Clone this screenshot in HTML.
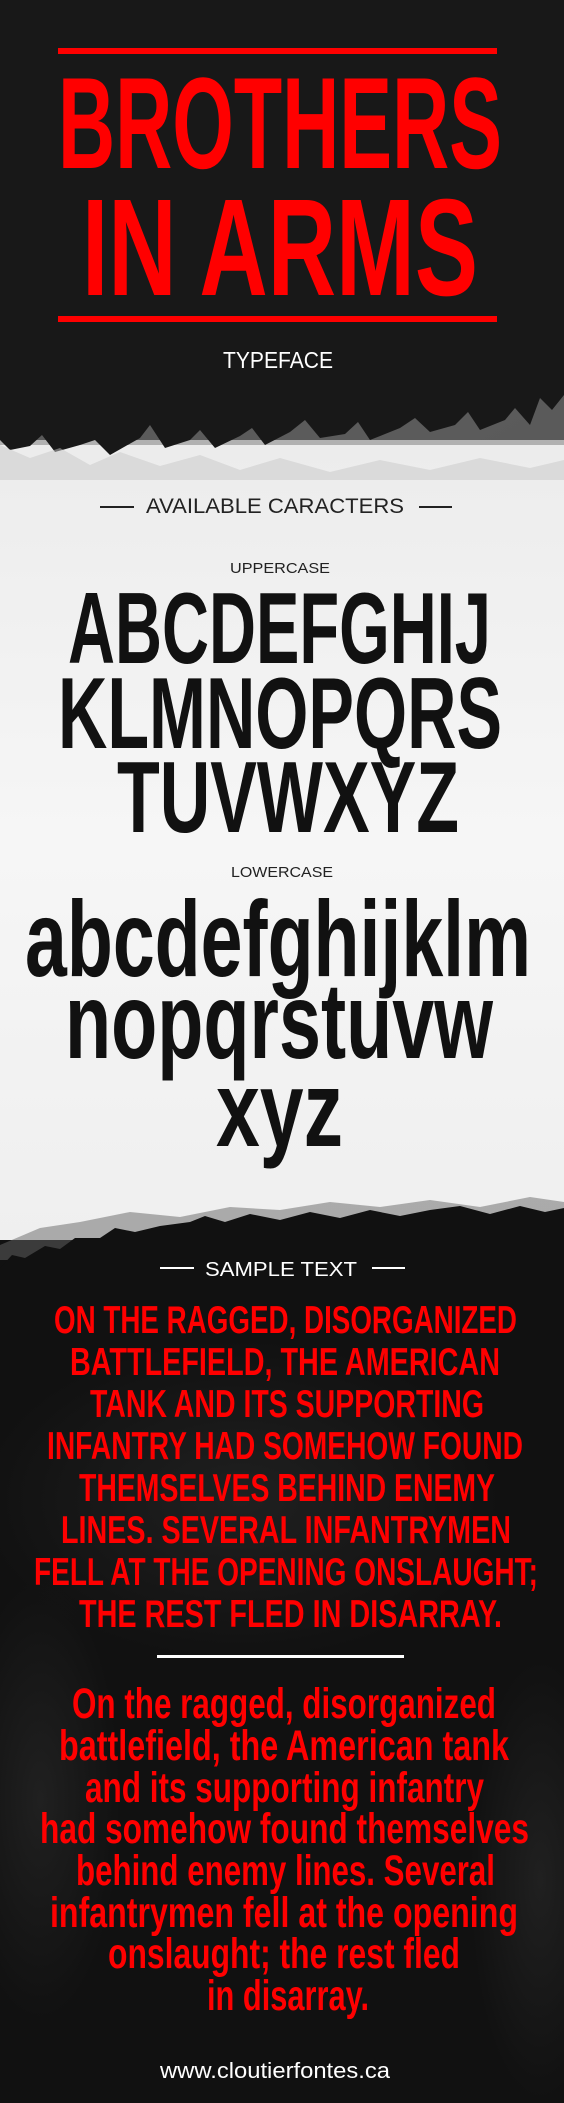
<!DOCTYPE html>
<html><head><meta charset="utf-8"><style>html,body{margin:0;padding:0;background:#111}svg{display:block}</style></head>
<body>
<svg width="564" height="2103" viewBox="0 0 564 2103" xmlns="http://www.w3.org/2000/svg" font-family="'Liberation Sans', sans-serif">
<defs>
<radialGradient id="g1" cx="0.5" cy="0.4" r="0.7"><stop offset="0" stop-color="#1f1f1f"/><stop offset="1" stop-color="#131313"/></radialGradient>
<linearGradient id="w" x1="0" y1="0" x2="0" y2="1"><stop offset="0" stop-color="#ececec"/><stop offset="0.5" stop-color="#f6f6f6"/><stop offset="1" stop-color="#efefef"/></linearGradient>
<radialGradient id="soft"><stop offset="0" stop-color="#2a2a2a" stop-opacity="0.6"/><stop offset="1" stop-color="#2a2a2a" stop-opacity="0"/></radialGradient>
</defs>
<rect width="564" height="2103" fill="#111"/>
<rect width="564" height="460" fill="url(#g1)"/>
<rect y="440" width="564" height="800" fill="url(#w)"/>
<!-- top ragged transition -->
<polygon fill="#8a8a8a" opacity="0.6" points="0,390 20,400 40,385 60,405 90,392 120,408 150,385 180,410 210,382 240,400 270,375 300,392 330,385 360,402 390,385 420,395 450,388 480,400 510,385 540,395 564,385 564,445 0,445"/>
<polygon fill="#181818" points="0,0 564,0 564,395 552,410 540,398 530,425 515,408 505,420 480,430 468,412 455,425 430,432 415,418 400,428 370,440 358,422 345,434 320,438 305,420 290,432 265,445 252,428 240,436 215,448 200,430 190,440 165,448 150,425 140,438 110,455 95,440 80,445 55,452 42,435 30,446 10,450 0,440"/>
<polygon fill="#c8c8c8" opacity="0.5" points="0,445 30,458 60,448 90,465 120,452 160,466 200,455 240,470 280,458 330,472 380,460 430,470 480,458 530,468 564,460 564,480 0,480"/>
<!-- bottom ragged transition -->
<polygon fill="#666" opacity="0.5" points="0,1245 40,1228 80,1222 130,1212 180,1217 230,1207 280,1210 330,1202 380,1207 430,1200 480,1207 530,1197 564,1202 564,1260 0,1260"/>
<polygon fill="#111" points="0,1268 12,1255 25,1258 45,1246 60,1249 75,1238 100,1238 115,1228 135,1232 160,1226 190,1222 205,1216 225,1222 250,1214 280,1220 310,1212 340,1218 370,1210 400,1216 430,1210 460,1206 490,1214 520,1206 545,1212 564,1208 564,2103 0,2103"/>
<ellipse cx="240" cy="1500" rx="260" ry="160" fill="url(#soft)"/>
<ellipse cx="40" cy="1800" rx="80" ry="220" fill="url(#soft)"/>
<ellipse cx="540" cy="1880" rx="70" ry="220" fill="url(#soft)"/>

<!-- Title -->
<rect x="58" y="48" width="439" height="6" fill="#f00"/>
<rect x="58" y="316" width="439" height="6" fill="#f00"/>
<text x="58" y="168" font-size="130" font-weight="bold" fill="#f00" textLength="444" lengthAdjust="spacingAndGlyphs">BROTHERS</text>
<text x="82" y="295" font-size="138" font-weight="bold" fill="#f00" textLength="396" lengthAdjust="spacingAndGlyphs">IN ARMS</text>
<text x="223" y="368" font-size="23" fill="#fff" textLength="110" lengthAdjust="spacingAndGlyphs">TYPEFACE</text>

<!-- Available -->
<rect x="100" y="506" width="34" height="2" fill="#222"/>
<rect x="419" y="506" width="33" height="2" fill="#222"/>
<text x="146" y="513" font-size="21" fill="#222" textLength="258" lengthAdjust="spacingAndGlyphs">AVAILABLE CARACTERS</text>

<text x="230" y="573" font-size="15" fill="#222" textLength="100" lengthAdjust="spacingAndGlyphs">UPPERCASE</text>
<g font-size="101" font-weight="bold" fill="#111">
<text x="68" y="663" textLength="423" lengthAdjust="spacingAndGlyphs">ABCDEFGHIJ</text>
<text x="58" y="748" textLength="444" lengthAdjust="spacingAndGlyphs">KLMNOPQRS</text>
<text x="117" y="832" textLength="342" lengthAdjust="spacingAndGlyphs">TUVWXYZ</text>
</g>
<text x="231" y="877" font-size="15" fill="#222" textLength="102" lengthAdjust="spacingAndGlyphs">LOWERCASE</text>
<g font-size="108" font-weight="bold" fill="#111">
<text x="25" y="976" textLength="506" lengthAdjust="spacingAndGlyphs">abcdefghijklm</text>
<text x="65" y="1058" textLength="428" lengthAdjust="spacingAndGlyphs">nopqrstuvw</text>
<text x="216" y="1146" textLength="127" lengthAdjust="spacingAndGlyphs">xyz</text>
</g>

<!-- Sample -->
<rect x="160" y="1267" width="34" height="2" fill="#fff"/>
<rect x="372" y="1267" width="33" height="2" fill="#fff"/>
<text x="205" y="1276" font-size="20" fill="#fff" textLength="152" lengthAdjust="spacingAndGlyphs">SAMPLE TEXT</text>
<g font-size="39" font-weight="bold" fill="#f00">
<text x="54" y="1333" textLength="463" lengthAdjust="spacingAndGlyphs">ON THE RAGGED, DISORGANIZED</text>
<text x="70" y="1375" textLength="430" lengthAdjust="spacingAndGlyphs">BATTLEFIELD, THE AMERICAN</text>
<text x="90" y="1417" textLength="394" lengthAdjust="spacingAndGlyphs">TANK AND ITS SUPPORTING</text>
<text x="47" y="1459" textLength="476" lengthAdjust="spacingAndGlyphs">INFANTRY HAD SOMEHOW FOUND</text>
<text x="79" y="1501" textLength="416" lengthAdjust="spacingAndGlyphs">THEMSELVES BEHIND ENEMY</text>
<text x="61" y="1543" textLength="450" lengthAdjust="spacingAndGlyphs">LINES. SEVERAL INFANTRYMEN</text>
<text x="34" y="1585" textLength="504" lengthAdjust="spacingAndGlyphs">FELL AT THE OPENING ONSLAUGHT;</text>
<text x="79" y="1627" textLength="423" lengthAdjust="spacingAndGlyphs">THE REST FLED IN DISARRAY.</text>
</g>
<rect x="157" y="1655" width="247" height="3" fill="#fff"/>
<g font-size="43" font-weight="bold" fill="#f00">
<text x="72" y="1718" textLength="424" lengthAdjust="spacingAndGlyphs">On the ragged, disorganized</text>
<text x="59" y="1760" textLength="450" lengthAdjust="spacingAndGlyphs">battlefield, the American tank</text>
<text x="85" y="1802" textLength="399" lengthAdjust="spacingAndGlyphs">and its supporting infantry</text>
<text x="40" y="1843" textLength="489" lengthAdjust="spacingAndGlyphs">had somehow found themselves</text>
<text x="76" y="1885" textLength="419" lengthAdjust="spacingAndGlyphs">behind enemy lines. Several</text>
<text x="50" y="1927" textLength="468" lengthAdjust="spacingAndGlyphs">infantrymen fell at the opening</text>
<text x="108" y="1968" textLength="352" lengthAdjust="spacingAndGlyphs">onslaught; the rest fled</text>
<text x="207" y="2010" textLength="162" lengthAdjust="spacingAndGlyphs">in disarray.</text>
</g>
<text x="160" y="2078" font-size="22" fill="#fff" textLength="230" lengthAdjust="spacingAndGlyphs">www.cloutierfontes.ca</text>
</svg>
</body></html>
